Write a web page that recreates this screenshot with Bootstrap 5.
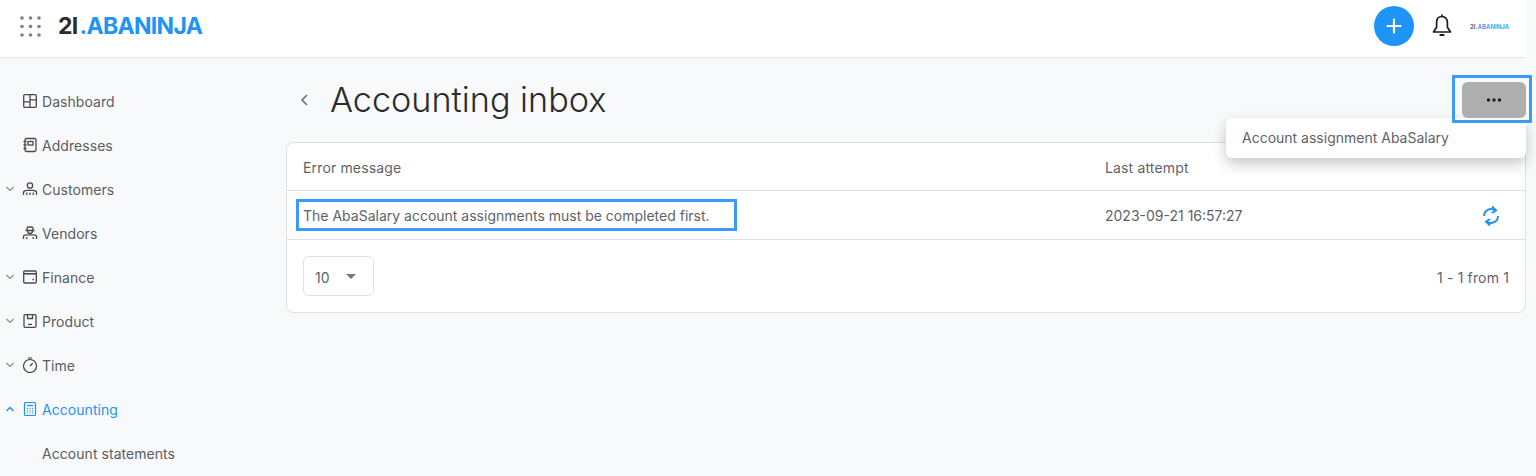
<!DOCTYPE html>
<html lang="en">
<head>
<meta charset="utf-8">
<title>Accounting inbox</title>
<link href="https://cdn.jsdelivr.net/npm/bootstrap@5.3.0/dist/css/bootstrap.min.css" rel="stylesheet">
<style>
html,body{height:476px;overflow:hidden}
body{background:#f8f9fb;font-family:Inter,"Liberation Sans",sans-serif;font-size:14px;color:#5f6368}
.topbar{height:58px;width:1526px;background:#fff;border-bottom:1px solid #e4e4e4;padding:0 16px 5px 20px}
.brand{font-family:Inter,sans-serif;font-weight:700;font-size:23px;letter-spacing:-.7px;color:#1e94f6;margin-left:17px;line-height:1}
.brand span{color:#2a2a2a;margin-right:2px}
.addbtn{width:40px;height:40px;border-radius:50%;background:#1e94f6;border:0;padding:0}
.bellico{margin-left:18px}
.minilogo{font-size:6px;font-weight:700;color:#4ba6f5;width:40px;margin-left:18px}
.minilogo span{color:#666}
.sidebar{width:286px;padding-top:21px;flex:none;letter-spacing:.05px}
.sideitem{height:44px;color:#5a5d61;padding-left:5px;white-space:nowrap}
.sideitem.on{color:#1e94f6}
.chev{width:10px;flex:none;margin-right:7px}
.sideico{width:16px;height:16px;flex:none;margin-right:4px}
.mainpane{width:1240px;padding-top:22px}
.headrow{height:40px;padding-left:14px;margin-bottom:22px}
.headrow h1{font-size:34.2px;font-weight:300;color:#2b2b2b;margin:0 0 0 21px}
.markbox{position:relative;z-index:6;border:3px solid #3a9bfc;padding:4px 3px 2px 7px;margin:-6px -6px -4px 0}
.morebtn{width:64px;height:36px;background:#aeaeae;border:0;border-radius:6px;padding:0}
.popmenu{position:absolute;top:118px;right:10px;width:300px;height:40px;background:#fff;border-radius:6px;box-shadow:0 6px 14px rgba(0,0,0,.22);padding:0 16px;color:#5f6368;line-height:40px;z-index:5}
.datacard{background:#fff;border:1px solid #e0e0e0;border-radius:8px;height:171px}
.datarow{height:49px;border-bottom:1px solid #e0e0e0;padding:1px 0 0 16px}
.datarow.headline{height:48px;letter-spacing:.15px}
.colfirst{width:802px;flex:none}
.errmark{margin:-1px 0 0 -7px;padding:0 27px 0 4px;height:32px;line-height:28px;border:3px solid #3a9bfc;width:441px;white-space:nowrap}
.pagesel{width:71px;height:40px;border:1px solid #e0e0e0;border-radius:6px;padding:2px 17px 0 11px;font-size:14px}
.caret{width:0;height:0;border-left:5px solid transparent;border-right:5px solid transparent;border-top:5px solid #777;margin-top:-2px}
.footrow{padding:16px 16px 0}
.pagecount{padding-top:2px;letter-spacing:.15px}
.spinico{margin-right:25px}
</style>
</head>
<body>
<header class="topbar d-flex align-items-center">
  <svg width="21" height="21" viewBox="0 0 21 21" fill="#808080" aria-hidden="true"><circle cx="2" cy="2" r="1.8"/><circle cx="10.5" cy="2" r="1.8"/><circle cx="19" cy="2" r="1.8"/><circle cx="2" cy="10.5" r="1.8"/><circle cx="10.5" cy="10.5" r="1.8"/><circle cx="19" cy="10.5" r="1.8"/><circle cx="2" cy="19" r="1.8"/><circle cx="10.5" cy="19" r="1.8"/><circle cx="19" cy="19" r="1.8"/></svg>
  <div class="brand"><span>2I</span>.ABANINJA</div>
  <div class="ms-auto d-flex align-items-center">
    <button class="addbtn d-flex align-items-center justify-content-center" aria-label="Add"><svg width="16" height="16" viewBox="0 0 16 16" stroke="#fff" stroke-width="2.2" stroke-linecap="round"><path d="M8 1.5v13M1.5 8h13"/></svg></button>
    <svg class="bellico" width="20" height="24" viewBox="0 0 20 24" fill="none" stroke="#1c1c1c" stroke-width="1.700" aria-hidden="true"><path d="M10 2.500c-3.600 0-5.400 2.800-5.400 6.200v4.600L1.500 18h17l-3.100-4.700V8.700c0-3.400-1.800-6.200-5.400-6.200z" stroke-linejoin="round"/><path d="M10 1v1.500" stroke-linecap="round"/><path d="M8.400 21h3.200" stroke-linecap="round" stroke-width="2"/></svg>
    <div class="minilogo text-nowrap"><span>2I</span>.ABANINJA</div>
  </div>
</header>
<div class="d-flex">
  <nav class="sidebar">
    <div class="sideitem d-flex align-items-center"><span class="chev"></span><svg class="sideico" viewBox="0 0 16 16" fill="none" stroke="#4a4a4a" stroke-width="1.300"><rect x="1.700" y="1.700" width="12.600" height="12.600" rx="1"/><path d="M8 1.700V14.300M1.700 8.800H8M8 6.800h6.300"/></svg>Dashboard</div>
    <div class="sideitem d-flex align-items-center"><span class="chev"></span><svg class="sideico" viewBox="0 0 16 16" fill="none" stroke="#4a4a4a" stroke-width="1.300"><rect x="3" y="1.500" width="11" height="13" rx="1.500"/><rect x="6" y="4.500" width="5" height="3.500"/><path d="M1.500 4.500h3M1.500 8h3M1.500 11.500h3"/></svg>Addresses</div>
    <div class="sideitem d-flex align-items-center"><svg class="chev" viewBox="0 0 10 6" height="6" fill="none" stroke="#8a8a8a" stroke-width="1.200"><path d="M1.500 1l3.500 3.500L8.500 1"/></svg><svg class="sideico" viewBox="0 0 16 16" fill="none" stroke="#4a4a4a" stroke-width="1.300"><circle cx="8" cy="4.500" r="2.700"/><path d="M1.500 14v-2.500C1.500 10 3 9.300 5 9.300h6c2 0 3.500.7 3.500 2.200V14M4.800 11.500V14M8 11.500V14M11.200 11.500V14"/></svg>Customers</div>
    <div class="sideitem d-flex align-items-center"><span class="chev"></span><svg class="sideico" viewBox="0 0 16 16" fill="none" stroke="#4a4a4a" stroke-width="1.300"><path d="M5 5.500V3.500A1.500 1.500 0 0 1 6.500 2h3A1.500 1.500 0 0 1 11 3.500v2M3.500 5.500h9M5.500 6c0 3.300 5 3.300 5 0"/><path d="M1.500 14v-2.500C1.500 10 3 9.800 5 9.800h6c2 0 3.500.2 3.500 1.700V14M4.800 12V14M11.200 12V14"/></svg>Vendors</div>
    <div class="sideitem d-flex align-items-center"><svg class="chev" viewBox="0 0 10 6" height="6" fill="none" stroke="#8a8a8a" stroke-width="1.200"><path d="M1.500 1l3.500 3.500L8.500 1"/></svg><svg class="sideico" viewBox="0 0 16 16" fill="none" stroke="#4a4a4a" stroke-width="1.300"><rect x="1.700" y="2" width="12.600" height="12" rx="1"/><path d="M1.700 4.800h12.600" stroke-width="1.600"/><path d="M10.500 10.500h1.500"/></svg>Finance</div>
    <div class="sideitem d-flex align-items-center"><svg class="chev" viewBox="0 0 10 6" height="6" fill="none" stroke="#8a8a8a" stroke-width="1.200"><path d="M1.500 1l3.500 3.500L8.500 1"/></svg><svg class="sideico" viewBox="0 0 16 16" fill="none" stroke="#4a4a4a" stroke-width="1.300"><rect x="2" y="1.700" width="12" height="12.600" rx="1"/><path d="M5.500 1.700v3.800h5V1.700M6 11.300h4"/></svg>Product</div>
    <div class="sideitem d-flex align-items-center"><svg class="chev" viewBox="0 0 10 6" height="6" fill="none" stroke="#8a8a8a" stroke-width="1.200"><path d="M1.500 1l3.500 3.500L8.500 1"/></svg><svg class="sideico" viewBox="0 0 16 16" fill="none" stroke="#3c3c3c" stroke-width="1.200"><circle cx="8" cy="9" r="6.500"/><path d="M6 1h4M8 9l2.800-2.800"/></svg>Time</div>
    <div class="sideitem on d-flex align-items-center"><svg class="chev" viewBox="0 0 10 6" height="6" fill="none" stroke="#1e94f6" stroke-width="1.500"><path d="M1.500 5L5 1.500 8.500 5"/></svg><svg class="sideico" viewBox="0 0 16 16" fill="none" stroke="#1e94f6" stroke-width="1.200"><rect x="2.500" y="1.500" width="11" height="13" rx="1"/><path d="M5 4.500h6"/><path d="M5 7.500h1M7.500 7.500h1M10 7.500h1M5 9.800h1M7.500 9.800h1M10 9.800h1M5 12h1M7.500 12h1M10 12h1"/></svg>Accounting</div>
    <div class="sideitem d-flex align-items-center"><span class="chev"></span><span class="sideico"></span>Account statements</div>
  </nav>
  <main class="mainpane">
    <div class="headrow d-flex align-items-center">
      <svg width="9" height="12" viewBox="0 0 9 12" fill="none" stroke="#6a6a6a" stroke-width="1.500" aria-hidden="true"><path d="M7 1L2 6l5 5"/></svg>
      <h1>Accounting inbox</h1>
      <div class="ms-auto markbox"><button class="morebtn d-flex align-items-center justify-content-center" aria-label="More"><svg width="16" height="4" viewBox="0 0 16 4" fill="#1c1c1c"><circle cx="2.500" cy="2" r="1.700"/><circle cx="8" cy="2" r="1.700"/><circle cx="13.500" cy="2" r="1.700"/></svg></button></div>
    </div>
    <div class="datacard">
      <div class="datarow headline d-flex align-items-center"><div class="colfirst">Error message</div><div>Last attempt</div></div>
      <div class="datarow d-flex align-items-center">
        <div class="colfirst"><div class="errmark">The AbaSalary account assignments must be completed first.</div></div>
        <div>2023-09-21 16:57:27</div>
        <svg class="ms-auto spinico" width="18" height="22" viewBox="0 0 18 22" fill="none" stroke="#1e94f6" stroke-width="2" aria-hidden="true"><path d="M2 11a7 7 0 0 1 11-5.700"/><path d="M16 11a7 7 0 0 1-11 5.700"/><path d="M10 1.500l4 3.800-4 2.700M8 14l-4 2.700 4 3.800"/></svg>
      </div>
      <div class="footrow d-flex align-items-center justify-content-between">
        <div class="pagesel d-flex align-items-center justify-content-between"><span>10</span><span class="caret"></span></div>
        <div class="pagecount">1 - 1 from 1</div>
      </div>
    </div>
  </main>
</div>
<div class="popmenu">Account assignment AbaSalary</div>
<script src="https://cdn.jsdelivr.net/npm/bootstrap@5.3.0/dist/js/bootstrap.bundle.min.js"></script>
</body>
</html>
